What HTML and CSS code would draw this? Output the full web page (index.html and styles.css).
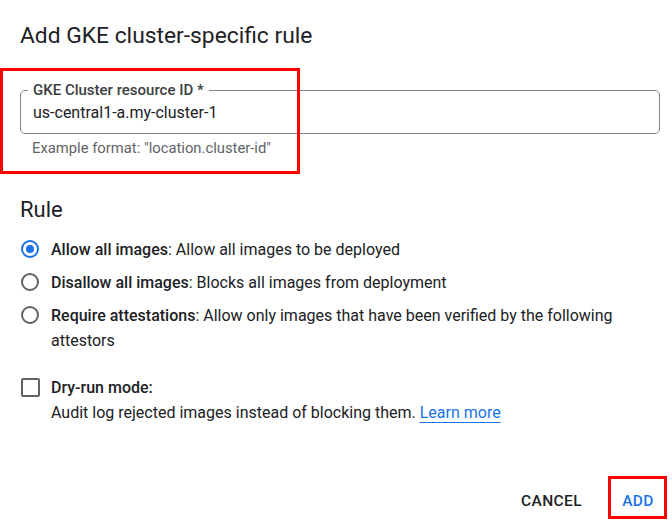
FILE: index.html
```html
<!DOCTYPE html>
<html lang="en">
<head>
  <meta charset="UTF-8" />
  <title>Add GKE cluster-specific rule</title>
  <link rel="stylesheet" href="styles.css">
</head>
<body>
<div class="dialog">
  <h1 class="title">Add GKE cluster-specific rule</h1>

  <div class="field">
    <div class="outline">
      <span class="label">GKE Cluster resource ID *</span>
      <span class="value">us-central1-a.my-cluster-1</span>
    </div>
    <div class="hint">Example format: "location.cluster-id"</div>
  </div>

  <h2 class="section">Rule</h2>
  <div class="options">
    <div class="option">
      <span class="radio checked"></span>
      <span class="text"><b>Allow all images</b>: Allow all images to be deployed</span>
    </div>
    <div class="option">
      <span class="radio"></span>
      <span class="text"><b>Disallow all images</b>: Blocks all images from deployment</span>
    </div>
    <div class="option">
      <span class="radio"></span>
      <span class="text"><b>Require attestations</b>: Allow only images that have been verified by the following attestors</span>
    </div>
  </div>

  <div class="dryrun">
    <span class="checkbox"></span>
    <div class="text">
      <b>Dry-run mode:</b><br>
      Audit log rejected images instead of blocking them. <a href="#" class="link">Learn more</a>
    </div>
  </div>

  <div class="actions">
    <button class="btn">Cancel</button>
    <button class="btn primary">Add</button>
  </div>

  <div class="mark mark-field"></div>
  <div class="mark mark-add"></div>
</div>
</body>
</html>
```

FILE: styles.css
```css
body {
  margin: 0;
  background: #fff;
  font-family: Roboto, "Noto Sans", Arial, sans-serif;
  color: #202124;
}
.dialog {
  position: relative;
  padding: 22px 12px 0 20px;
  height: 501px;
}
.title {
  margin: 0;
  font-size: 22.8px;
  line-height: 28px;
  font-weight: 400;
}
.field {
  margin-top: 40px;
}
.outline {
  position: relative;
  height: 44px;
  box-sizing: border-box;
  border: 1px solid #80868b;
  border-radius: 5px;
  padding: 0 12px;
  display: flex;
  align-items: center;
}
.label {
  position: absolute;
  left: 7px;
  top: -10px;
  padding: 0 5px;
  background: #fff;
  font-size: 15px;
  line-height: 18px;
  font-weight: 500;
  color: #3c4043;
}
.value {
  font-size: 16px;
  line-height: 24px;
  margin-top: 2px;
}
.hint {
  padding: 4px 12px 0;
  font-size: 14.8px;
  line-height: 20px;
  color: #5f6368;
}
.section {
  margin: 38px 0 0;
  font-size: 22px;
  line-height: 28px;
  font-weight: 400;
}
.options {
  margin-top: 9px;
}
.option {
  display: flex;
  gap: 12px;
  padding: 4px 0;
}
.text {
  font-size: 16px;
  line-height: 25px;
  color: #202124;
}
.text b {
  font-weight: 500;
}
.radio {
  flex: none;
  width: 18px;
  height: 18px;
  margin: 3px 0 0 1px;
  box-sizing: border-box;
  border: 2px solid #5f6368;
  border-radius: 50%;
  position: relative;
}
.radio.checked {
  border-color: #1a73e8;
}
.radio.checked::after {
  content: "";
  position: absolute;
  left: 3px;
  top: 3px;
  width: 8px;
  height: 8px;
  border-radius: 50%;
  background: #1a73e8;
}
.dryrun {
  display: flex;
  gap: 11px;
  margin-top: 18px;
}
.checkbox {
  flex: none;
  width: 19px;
  height: 19px;
  margin: 3px 0 0 1px;
  box-sizing: border-box;
  border: 2px solid #5f6368;
  border-radius: 2px;
}
.link {
  color: #1a73e8;
  text-decoration: underline;
  text-underline-offset: 4px;
}
.actions {
  display: flex;
  justify-content: flex-end;
  gap: 8px;
  margin: 58px -10px 0 0;
}
.btn {
  height: 36px;
  min-width: 64px;
  padding: 0 16px;
  border: none;
  background: none;
  font-family: inherit;
  font-size: 15.5px;
  font-weight: 500;
  letter-spacing: 0.4px;
  text-transform: uppercase;
  color: #202124;
}
.btn.primary {
  color: #1a73e8;
}
.mark {
  position: absolute;
  border: 3px solid #ff0000;
  box-sizing: border-box;
}
.mark-field {
  left: 0;
  top: 68px;
  width: 300px;
  height: 106px;
}
.mark-add {
  left: 608px;
  top: 476px;
  width: 59px;
  height: 43px;
}
```
